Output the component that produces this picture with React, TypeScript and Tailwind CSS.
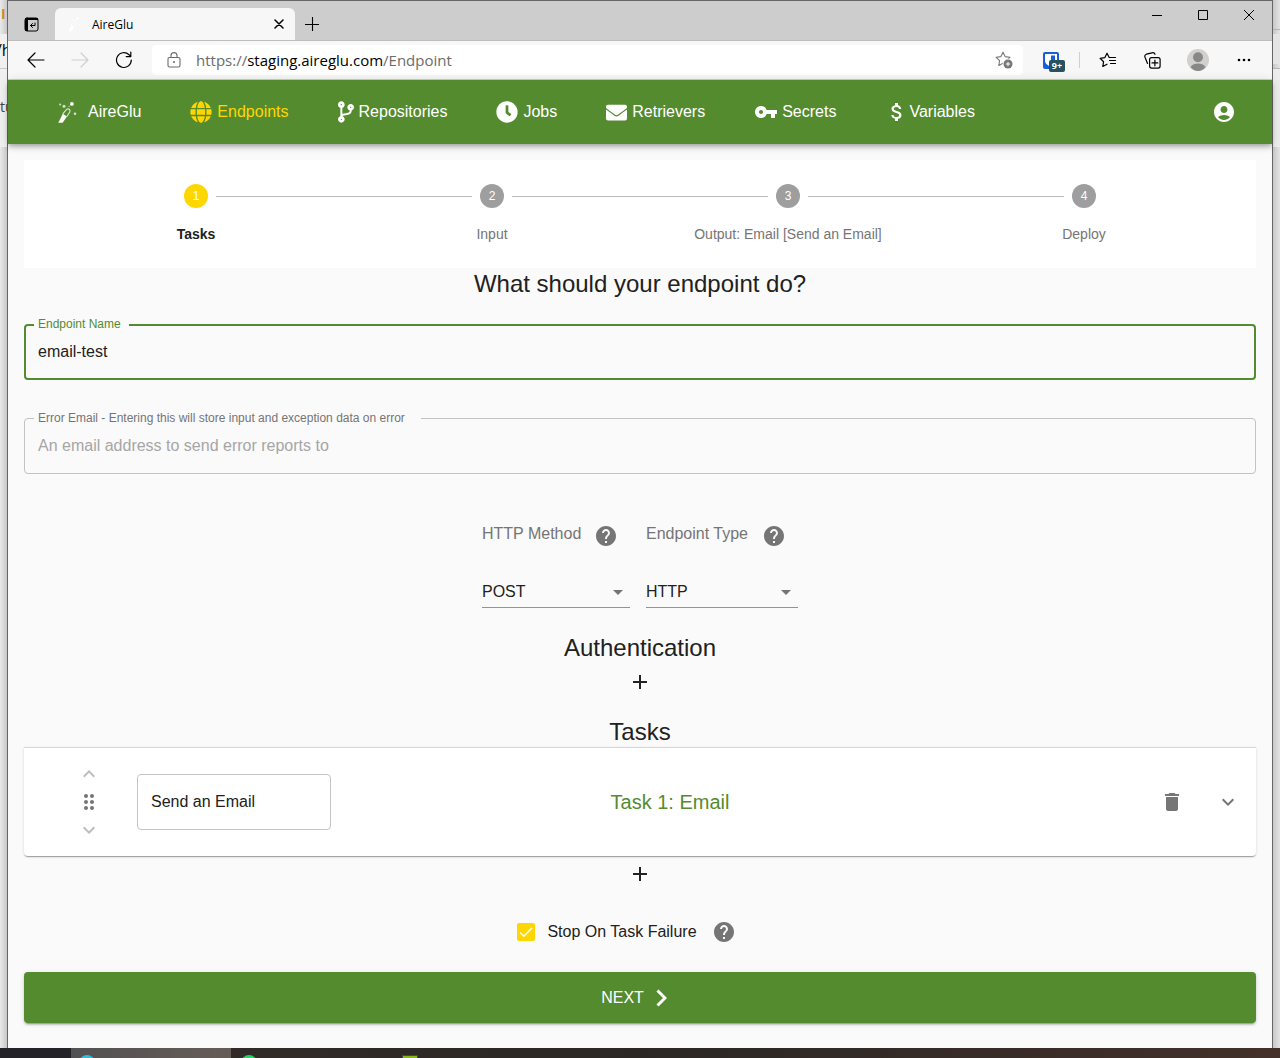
import { useState, type ReactNode } from "react";
import { FaClock, FaCodeBranch, FaEnvelope, FaGlobe } from "react-icons/fa";
import {
  MdAccountCircle,
  MdAdd,
  MdArrowDropDown,
  MdAttachMoney,
  MdCheck,
  MdDelete,
  MdDragIndicator,
  MdExpandLess,
  MdExpandMore,
  MdHelp,
  MdVpnKey,
} from "react-icons/md";

function Wand({ className }: { className: string }) {
  return (
    <svg viewBox="0 0 24 24" className={className} fill="currentColor" aria-hidden="true">
      <path d="M2.300 22.700h4.300L11 16.500 6.800 13.800z" />
      <path
        d="M6.800 13.800L10.400 9.600q1.400-1.300 2.900-.3 1.300 1 .4 2.600L11 16.500"
        fill="none"
        stroke="currentColor"
        strokeWidth="1.100"
        opacity=".8"
      />
      <circle cx="15.900" cy="3.900" r="1.900" />
      <circle cx="8" cy="6.200" r="1.500" opacity=".75" />
      <circle cx="4.200" cy="4.600" r="1" opacity=".75" />
      <circle cx="19" cy="13.700" r="1.300" opacity=".75" />
      <circle cx="13" cy="6.500" r=".7" opacity=".6" />
    </svg>
  );
}

const line = { fill: "none", stroke: "currentColor", strokeLinecap: "round", strokeLinejoin: "round" } as const;

function TitleBar() {
  return (
    <div className="flex h-[39px] items-end bg-[#cdcdcd]">
      <button aria-label="Tab actions" className="flex h-8 w-[47px] items-center justify-center">
        <svg width="15" height="15" viewBox="0 0 15 15" aria-hidden="true">
          <rect x="1" y="1" width="13" height="13" rx="2" {...line} strokeWidth="1" />
          <path d="M1 1h13v2H4v11H1z" />
          <path d="M11 6v2.500H6.500M8.500 6.500l-2 2 2 2" {...line} strokeWidth="1" />
        </svg>
      </button>
      <div className="flex h-8 w-60 items-center rounded-t-md bg-[#f7f7f7] pr-2 pl-3">
        <Wand className="size-4 text-white" />
        <span className="flex-1 pt-px pl-[9px] font-['Open_Sans',sans-serif] text-xs text-black">AireGlu</span>
        <button aria-label="Close tab" className="flex size-4 items-center justify-center">
          <svg width="10" height="10" viewBox="0 0 10 10" aria-hidden="true">
            <path d="M1 1l8 8M9 1l-8 8" {...line} strokeWidth="1.5" />
          </svg>
        </button>
      </div>
      <button aria-label="New tab" className="flex h-8 w-[34px] items-center justify-center">
        <svg width="14" height="14" viewBox="0 0 14 14" aria-hidden="true">
          <path d="M7.5 0v14M0 7.5h14" {...line} strokeWidth="1.1" />
        </svg>
      </button>
      <div className="ml-auto flex self-start">
        <button aria-label="Minimize" className="flex h-7 w-[46px] items-center justify-center">
          <svg width="10" height="11" viewBox="0 0 10 11" aria-hidden="true"><path d="M0 5h10v1H0z" /></svg>
        </button>
        <button aria-label="Maximize" className="flex h-7 w-[46px] items-center justify-center">
          <svg width="10" height="10" viewBox="0 0 10 10" aria-hidden="true"><path d="M.5.5h9v9h-9z" fill="none" stroke="black" /></svg>
        </button>
        <button aria-label="Close" className="flex h-7 w-[46px] items-center justify-center">
          <svg width="10" height="10" viewBox="0 0 10 10" aria-hidden="true"><path d="M0 0l10 10M10 0L0 10" fill="none" stroke="black" /></svg>
        </button>
      </div>
    </div>
  );
}

const star = "M8 1.2l2.1 4.4 4.8.7-3.5 3.4.8 4.8L8 12.2l-4.2 2.3.8-4.8L1.1 6.3l4.8-.7z";

function Toolbar() {
  return (
    <div className="flex h-10 items-center border-t border-b border-t-[#bdbdbd] border-b-[#cfcfcf] bg-[#f7f7f7]">
      <div className="flex w-36 items-center pl-1.5">
        <button aria-label="Back" className="flex w-11 justify-center text-black">
          <svg width="18" height="16" viewBox="0 0 18 16" aria-hidden="true"><path d="M1 8h16M8 1L1 8l7 7" {...line} strokeWidth="1.2" /></svg>
        </button>
        <button aria-label="Forward" className="flex w-11 justify-center text-[#cfcfcf]">
          <svg width="18" height="16" viewBox="0 0 18 16" aria-hidden="true"><path d="M1 8h16M10 1l7 7-7 7" {...line} strokeWidth="1.2" /></svg>
        </button>
        <button aria-label="Refresh" className="flex w-11 justify-center text-black">
          <svg width="18" height="18" viewBox="0 0 18 18" aria-hidden="true"><path d="M16.3 9A7.4 7.4 0 1 1 14 3.700L15.800 5.500M15.800 1v4.600h-4.600" {...line} strokeWidth="1.200" /></svg>
        </button>
      </div>
      <div className="flex h-[30px] min-w-0 flex-1 items-center rounded bg-white pr-2.5 pl-[15px]">
        <svg width="14" height="16" viewBox="0 0 14 16" className="shrink-0 text-[#6b6b6b]" aria-hidden="true">
          <rect x="1" y="5.5" width="12" height="9.5" rx="1.5" {...line} strokeWidth="1.1" />
          <path d="M4 5.5V3.6a3 3 0 0 1 6 0v1.9" {...line} strokeWidth="1.1" />
          <circle cx="7" cy="10" r="1" fill="currentColor" />
        </svg>
        <div role="textbox" aria-label="Address" className="min-w-0 flex-1 truncate pl-[15px] font-['Open_Sans',sans-serif] text-[15px] text-[#6b6b6b]">
          https://<span className="text-black">staging.aireglu.com</span>/Endpoint
        </div>
        <button aria-label="Add to favorites" className="text-[#767676]">
          <svg width="18" height="18" viewBox="0 0 18 18" aria-hidden="true">
            <path d={star} {...line} strokeWidth="1.1" />
            <circle cx="13" cy="13" r="5.4" fill="white" />
            <circle cx="13" cy="13" r="4.5" fill="currentColor" />
            <path d="M13 10.8v4.4M10.8 13h4.4" stroke="white" />
          </svg>
        </button>
      </div>
      <button aria-label="Password manager, 9+ items" className="relative ml-5 size-5">
        <svg width="16" height="17" viewBox="0 0 16 17" aria-hidden="true">
          <rect width="16" height="17" rx="2" fill="#175ddc" />
          <path d="M2 2h12v7c0 3.500-6 6-6 6S2 12.500 2 9z" fill="white" />
          <path d="M8 3.500h4V9c0 2-4 4-4 4z" fill="#175ddc" />
        </svg>
        <span className="absolute top-2.5 left-1.5 flex h-3 w-4 items-center justify-center rounded-xs bg-[#28505f] font-['Open_Sans',sans-serif] text-[9px] font-bold text-white">9+</span>
      </button>
      <div className="ml-4 h-4 w-px bg-[#d0d0d0]" />
      <div className="flex items-center pr-1 pl-[5px]">
        <button aria-label="Favorites" className="flex w-[45px] justify-center">
          <svg width="18" height="16" viewBox="0 0 18 16" aria-hidden="true">
            <path d="M10.200 5.500L8 1.200 5.900 5.600l-4.800.7 3.500 3.400-.8 4.800L8 12.200M10.500 5.500h6M10.500 8.500h6M11.500 11.500h5" {...line} strokeWidth="1.2" />
          </svg>
        </button>
        <button aria-label="Collections" className="flex w-[45px] justify-center">
          <svg width="17" height="17" viewBox="0 0 17 17" aria-hidden="true">
            <rect x="5.600" y="5.600" width="10.500" height="10.500" rx="2" {...line} strokeWidth="1.2" />
            <path d="M10.900 8v5.800M8 10.900h5.800M3.500 11.500L1 5.300C.5 3.800 1 2.700 2.400 2.200L8 .8c1.500-.4 2.500 0 3 1.500" {...line} strokeWidth="1.200" />
          </svg>
        </button>
        <button aria-label="Profile" className="flex w-[45px] justify-center">
          <svg width="22" height="22" viewBox="0 0 22 22" aria-hidden="true">
            <circle cx="11" cy="11" r="11" fill="#d2d0ce" />
            <circle cx="11" cy="8.300" r="5" fill="#8a8886" />
            <path d="M3.500 18.200C5 15.500 8 14.500 11 14.500s6 1 7.500 3.700A11 11 0 0 1 11 22a11 11 0 0 1-7.500-3.800z" fill="#8a8886" />
          </svg>
        </button>
        <button aria-label="Settings and more" className="flex w-12 justify-center">
          <svg width="14" height="4" viewBox="0 0 14 4" aria-hidden="true">
            <circle cx="2" cy="2" r="1.300" /><circle cx="7" cy="2" r="1.300" /><circle cx="12" cy="2" r="1.300" />
          </svg>
        </button>
      </div>
    </div>
  );
}

function NavItem({ icon, label, active = false }: { icon: ReactNode; label: string; active?: boolean }) {
  return (
    <a href="#" className={active ? "flex items-center gap-[5px] text-[#ffd600]" : "flex items-center gap-[5px]"}>
      {icon}
      {label}
    </a>
  );
}

function NavBar() {
  return (
    <nav className="relative flex h-16 items-center gap-[49px] bg-[#558b2f] pr-9 pl-12 text-base text-white shadow-[0_2px_4px_-1px_rgba(0,0,0,0.2),0_4px_5px_0_rgba(0,0,0,0.14),0_1px_10px_0_rgba(0,0,0,0.12)]">
      <a href="#" className="flex items-center gap-2">
        <Wand className="size-6" />
        AireGlu
      </a>
      <NavItem active icon={<FaGlobe className="size-[22px]" />} label="Endpoints" />
      <NavItem icon={<FaCodeBranch className="h-[22px] w-4" />} label="Repositories" />
      <NavItem icon={<FaClock className="size-[22px]" />} label="Jobs" />
      <NavItem icon={<FaEnvelope className="size-[21px]" />} label="Retrievers" />
      <NavItem icon={<MdVpnKey className="-mr-px size-6" />} label="Secrets" />
      <NavItem icon={<MdAttachMoney className="-mr-[5px] size-6" />} label="Variables" />
      <button aria-label="Account" className="ml-auto">
        <MdAccountCircle className="size-6" />
      </button>
    </nav>
  );
}

const steps = ["Tasks", "Input", "Output: Email [Send an Email]", "Deploy"];

function Stepper() {
  return (
    <ol className="flex bg-white p-6">
      {steps.map((label, i) => (
        <li key={label} className="flex flex-1 flex-col items-center">
          <div className="flex w-full items-center gap-2">
            <span className={i === 0 ? "h-px flex-1" : "h-px flex-1 bg-[#bdbdbd]"} />
            <span className={i === 0 ? "flex size-6 items-center justify-center rounded-full bg-[#ffd600] text-xs text-white" : "flex size-6 items-center justify-center rounded-full bg-[#9e9e9e] text-xs text-white"}>
              {i + 1}
            </span>
            <span className={i === steps.length - 1 ? "h-px flex-1" : "h-px flex-1 bg-[#bdbdbd]"} />
          </div>
          <span className={i === 0 ? "mt-4 text-sm font-bold text-[#212121]" : "mt-4 text-sm text-[#757575]"}>{label}</span>
        </li>
      ))}
    </ol>
  );
}

function SelectField({ id, label, option, className }: { id: string; label: string; option: string; className: string }) {
  return (
    <div className={className}>
      <div className="flex items-center justify-between pr-3">
        <label htmlFor={id} className="pb-1 leading-5 text-[#757575]">{label}</label>
        <button aria-label={"About " + label} className="text-[#757575]">
          <MdHelp className="size-6" />
        </button>
      </div>
      <div className="relative mt-7 border-b border-[#949494]">
        <select id={id} className="h-[31px] w-full appearance-none bg-transparent outline-none">
          <option>{option}</option>
        </select>
        <MdArrowDropDown className="pointer-events-none absolute top-1 right-0 size-6 text-[#757575]" />
      </div>
    </div>
  );
}

function TaskCard() {
  return (
    <section className="flex h-[109px] items-center rounded-b border-t border-[#d8d8d8] bg-white pl-[53px] shadow-[0_2px_1px_-1px_rgba(0,0,0,0.2),0_1px_1px_0_rgba(0,0,0,0.14),0_1px_3px_0_rgba(0,0,0,0.12)]">
      <div className="flex flex-col items-center gap-1 text-[#757575]">
        <button aria-label="Move task up" className="text-[#bdbdbd]"><MdExpandLess className="size-6" /></button>
        <button aria-label="Drag task"><MdDragIndicator className="size-6" /></button>
        <button aria-label="Move task down" className="text-[#bdbdbd]"><MdExpandMore className="size-6" /></button>
      </div>
      <input aria-label="Task name" defaultValue="Send an Email" className="ml-9 h-14 w-[194px] rounded border border-[#c4c4c4] px-[13px] outline-none" />
      <h3 className="flex-1 text-center text-xl text-[#558b2f]">Task 1: Email</h3>
      <div className="flex w-[247px] items-center justify-end gap-8 pr-4 text-[#757575]">
        <button aria-label="Delete task"><MdDelete className="size-6" /></button>
        <button aria-label="Expand task"><MdExpandMore className="size-6" /></button>
      </div>
    </section>
  );
}

function EndpointForm() {
  const [stop, setStop] = useState(true);
  return (
    <main className="flex flex-1 flex-col bg-[#fafafa] px-4 pt-4 pb-6 text-base text-[#212121]">
      <Stepper />
      <h1 className="text-center text-2xl">What should your endpoint do?</h1>

      <div className="relative mt-6">
        <label htmlFor="name" className="absolute -top-2 left-2.5 bg-[#fafafa] pr-2 pl-1 text-xs text-[#558b2f]">Endpoint Name</label>
        <input id="name" defaultValue="email-test" className="h-14 w-full rounded border-2 border-[#558b2f] px-3 outline-none" />
      </div>
      <div className="relative mt-[38px]">
        <label htmlFor="error-email" className="absolute -top-2 left-2.5 bg-[#fafafa] pr-4 pl-1 text-xs text-[#757575]">
          Error Email - Entering this will store input and exception data on error
        </label>
        <input id="error-email" placeholder="An email address to send error reports to" className="h-14 w-full rounded border border-[#c2c2c2] px-[13px] outline-none placeholder:text-[#a6a6a6]" />
      </div>

      <div className="mt-[50px] flex justify-center gap-4">
        <SelectField id="method" label="HTTP Method" option="POST" className="w-[148px]" />
        <SelectField id="type" label="Endpoint Type" option="HTTP" className="w-[152px]" />
      </div>

      <h2 className="mt-6 text-center text-2xl">Authentication</h2>
      <button aria-label="Add authentication" className="mx-auto mt-1.5"><MdAdd className="size-6" /></button>

      <h2 className="mt-[22px] text-center text-2xl leading-[31px]">Tasks</h2>
      <TaskCard />
      <button aria-label="Add task" className="mx-auto mt-1.5"><MdAdd className="size-6" /></button>

      <div className="mt-[34px] flex items-center justify-center gap-[15px] pr-[27px]">
        <label className="flex items-center gap-3">
          <span className="relative flex size-[18px]">
            <input type="checkbox" checked={stop} onChange={() => setStop(!stop)} className="size-[18px] appearance-none rounded-xs border-2 border-[#757575] checked:border-[#ffd600] checked:bg-[#ffd600]" />
            {stop && <MdCheck className="pointer-events-none absolute inset-0 size-[18px] text-white" />}
          </span>
          Stop On Task Failure
        </label>
        <button aria-label="About stopping on failure" className="text-[#757575]"><MdHelp className="size-6" /></button>
      </div>

      <button className="mt-7 flex h-[51px] items-center justify-center gap-3 rounded bg-[#558b2f] pr-3 text-white shadow-[0_3px_1px_-2px_rgba(0,0,0,0.2),0_2px_2px_0_rgba(0,0,0,0.14),0_1px_5px_0_rgba(0,0,0,0.12)]">
        NEXT
        <svg width="11" height="18" viewBox="0 0 11 18" aria-hidden="true">
          <path d="M1.500 1.500L9 9l-7.500 7.500" fill="none" stroke="currentColor" strokeWidth="3" />
        </svg>
      </button>
    </main>
  );
}

function Taskbar() {
  return (
    <footer className="flex h-2.5 overflow-hidden bg-linear-to-r from-[#352d2a] via-[#2a2725] to-[#43302a]">
      <div className="w-[71px] bg-[#242327]" />
      <div className="w-40 bg-linear-to-r from-[#525152] to-[#665c57] pt-[7px] pl-2">
        <div className="size-4 rounded-full bg-[#2fbfd8]" />
      </div>
      <div className="pt-[7px] pl-2.5">
        <div className="size-4 rounded-full bg-[#25d366]" />
      </div>
      <div className="pt-[7px] pl-[145px]">
        <div className="size-4 border border-[#454545] bg-[#8ab517]" />
      </div>
    </footer>
  );
}

export default function App() {
  return (
    <div className="flex min-h-screen flex-col font-['Liberation_Sans',Arial,sans-serif]">
      <div className="flex flex-1">
        <div className="flex w-[7px] flex-col overflow-hidden bg-linear-to-r from-[#eaeaea] to-[#c8c8c8] font-['Open_Sans',sans-serif] text-base whitespace-nowrap">
          <span className="h-[34px] pt-1 pl-px text-sm font-bold text-[#c98a2b]">I</span>
          <span className="-ml-1 h-[34px] bg-[#f0f0f0] pt-1 text-black">/h</span>
          <span className="h-[79px] border-t border-[#c9c9c9] bg-[#f0f0f0] pt-7 text-sm text-[#444]">tu</span>
        </div>
        <div className="flex min-w-0 flex-1 flex-col border-x border-t border-[#666]">
          <TitleBar />
          <Toolbar />
          <NavBar />
          <EndpointForm />
        </div>
        <div className="w-[7px] bg-linear-to-r from-[#c8c8c8] to-[#e4e4e4]">
          <div className="h-[30px] border-b border-[#b5b5b5]" />
          <div className="mt-1 h-[30px] bg-[#e4e4e4]" />
          <div className="mt-1 h-[79px] border-t border-[#b5b5b5] bg-[#ececec]" />
        </div>
      </div>
      <Taskbar />
    </div>
  );
}
